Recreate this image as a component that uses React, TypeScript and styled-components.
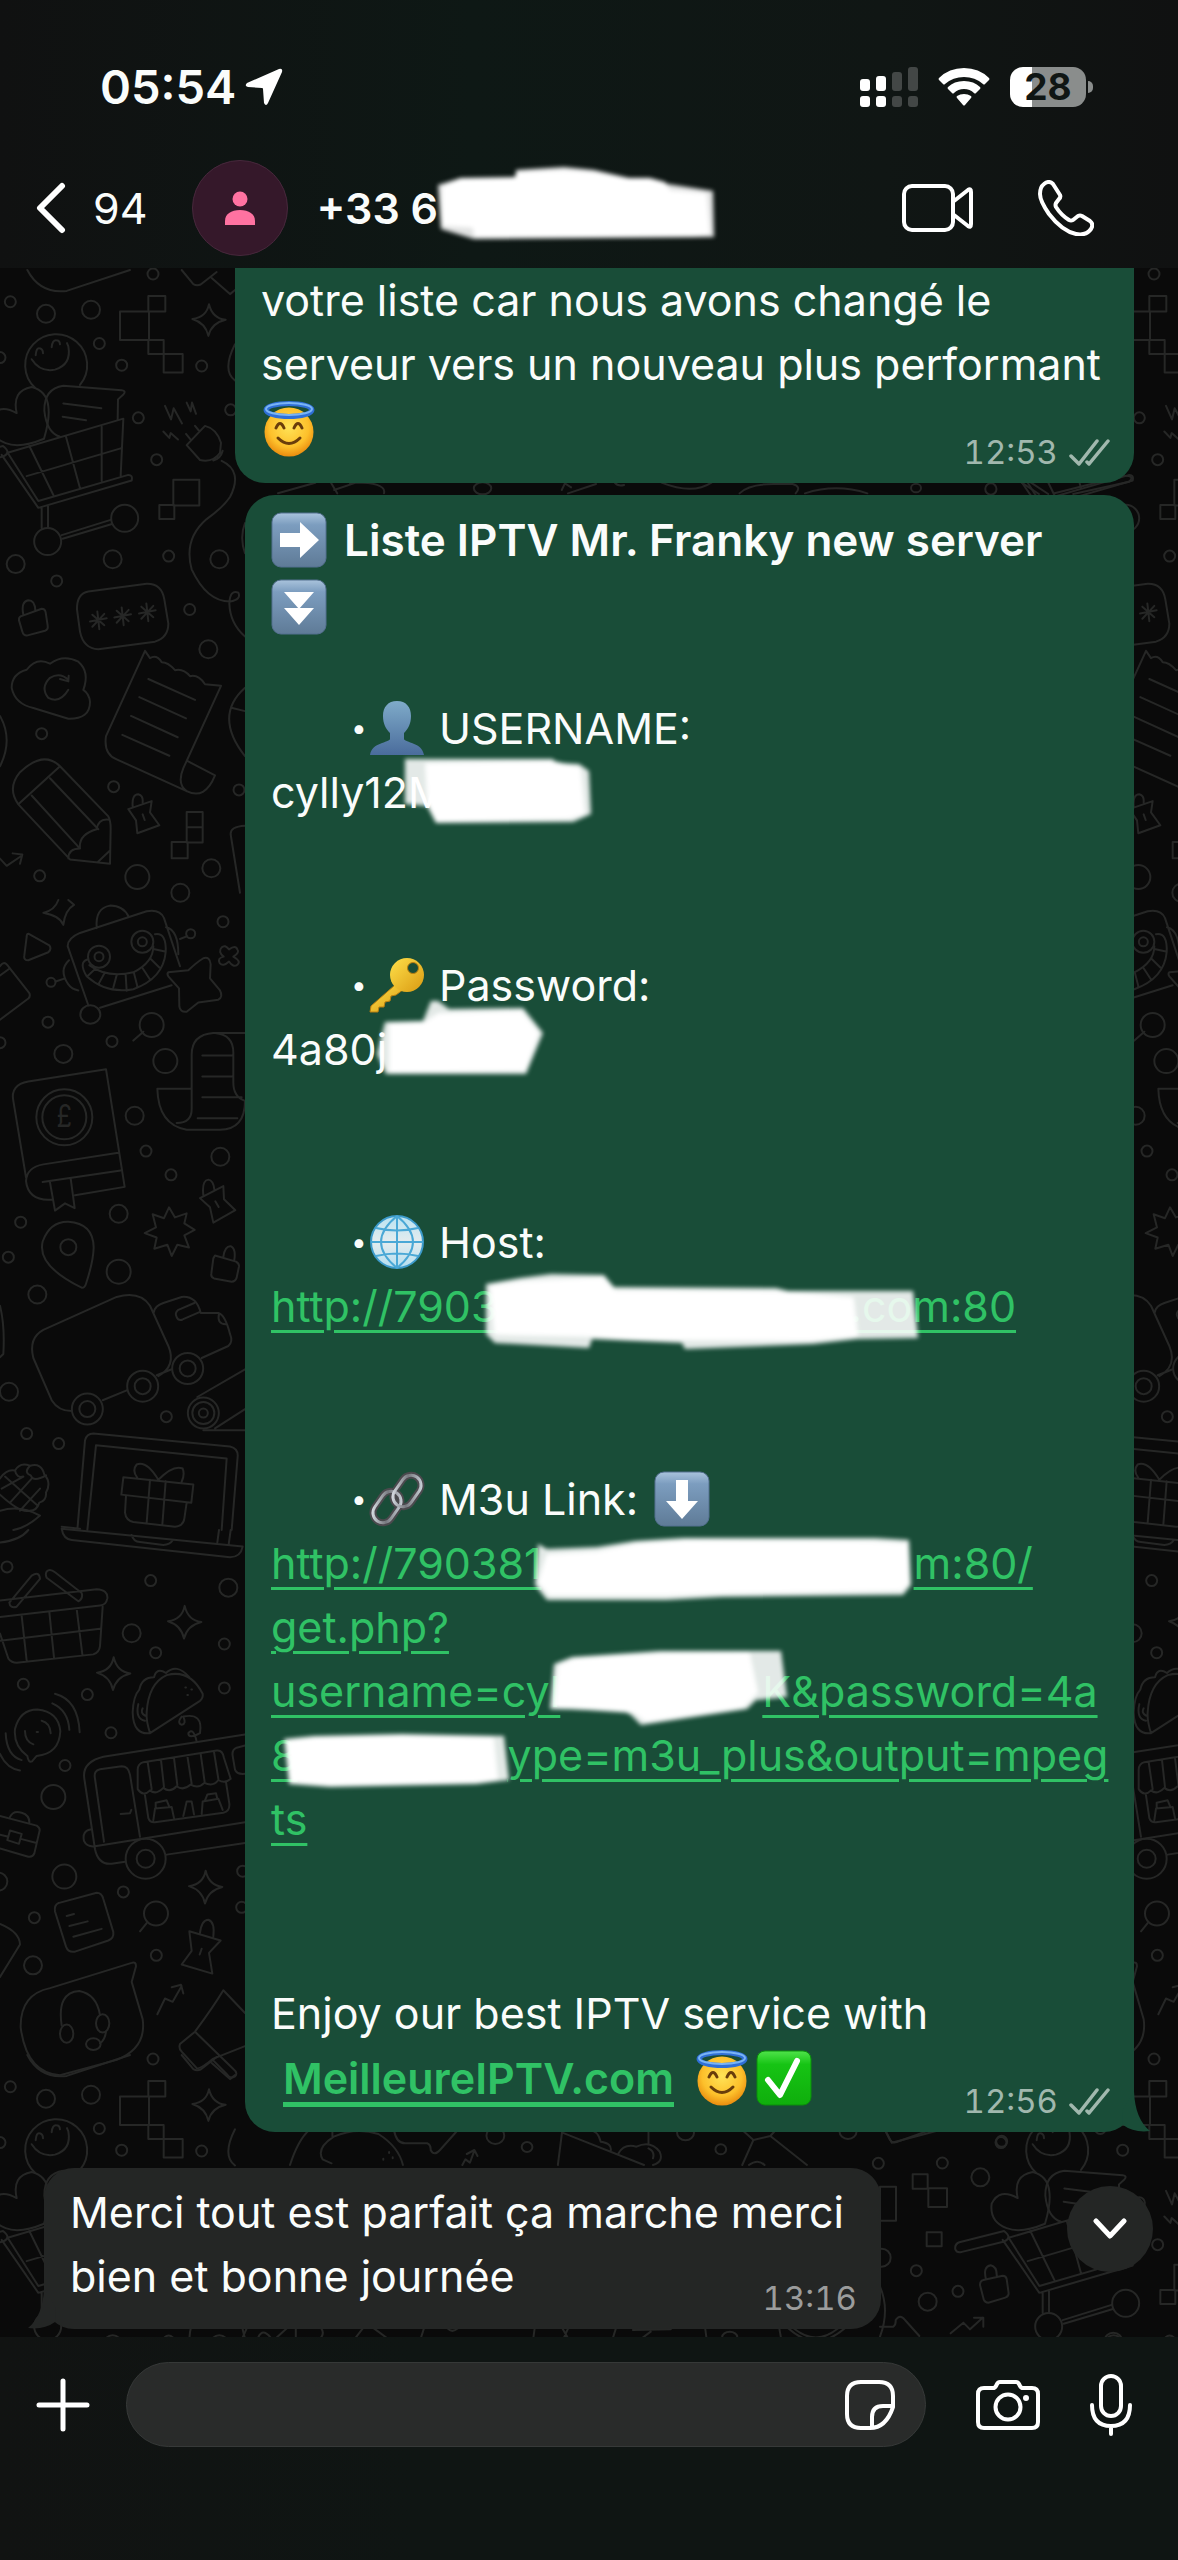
import React from 'react';
import styled, { createGlobalStyle } from 'styled-components';

const GlobalStyle = createGlobalStyle`
  *, *::before, *::after { box-sizing: border-box; }
  body { margin: 0; background: #0a0a0a; }
  button { border: 0; padding: 0; background: none; color: inherit; font: inherit; display: flex; align-items: center; justify-content: center; }
`;

const Page = styled.div`
  min-height: 100vh;
  display: flex;
  flex-direction: column;
  color: #fafcfb;
  font-family: Inter, 'Liberation Sans', sans-serif;
  font-size: 43px;
  line-height: 64px;
`;

const Header = styled.header`
  background: linear-gradient(90deg, #101111 0%, #0e1815 40%, #101614 75%, #101111 100%);
`;

const StatusBar = styled.div`
  display: flex;
  justify-content: space-between;
  align-items: center;
  height: 148px;
  padding: 26px 84px 0 100px;
`;

const StatusGroup = styled.div<{ $gap: number }>`
  display: flex;
  align-items: center;
  gap: ${(p) => p.$gap}px;
`;

const Clock = styled.time`
  font-size: 47px;
  font-weight: 600;
`;

const Battery = styled.div`
  position: relative;
  width: 76px;
  height: 40px;
  margin-right: 8px;
  border-radius: 13px;
  background: linear-gradient(90deg, #ffffff 22px, #8a8d8c 22px);
  color: #101614;
  font-size: 37px;
  font-weight: 700;
  line-height: 40px;
  text-align: center;
  &::after {
    content: '';
    position: absolute;
    left: 78px;
    top: 14px;
    width: 5px;
    height: 12px;
    border-radius: 0 6px 6px 0;
    background: #8a8d8c;
  }
`;

const NavBar = styled.div`
  display: flex;
  align-items: center;
  height: 120px;
  padding: 0 84px 0 36px;
`;

const BackButton = styled.button`
  && { gap: 27px; }
`;

const Avatar = styled.div`
  display: flex;
  align-items: center;
  justify-content: center;
  width: 96px;
  height: 96px;
  margin: 0 28px 0 45px;
  border: 1px solid #47283c;
  border-radius: 50%;
  background: #35182a;
`;

const Title = styled.h1`
  flex: 1;
  margin: 0;
  font-size: 43px;
  font-weight: 600;
  line-height: 64px;
  white-space: nowrap;
`;

const NavActions = styled.div`
  display: flex;
  align-items: center;
  gap: 64px;
`;

const Chat = styled.main`
  position: relative;
  flex: 1;
  display: flex;
  flex-direction: column;
  padding: 0 44px 8px;
  overflow: hidden;
  background: #0a0a0a;
`;

const Wallpaper = styled.svg`
  position: absolute;
  inset: 0;
  width: 100%;
  height: 100%;
  fill: none;
  stroke: #262726;
  stroke-width: 2;
  stroke-linecap: round;
  stroke-linejoin: round;
  path, ellipse, rect, polygon { vector-effect: non-scaling-stroke; }
`;

const Bubble = styled.article<{ $own?: boolean; $cut?: boolean; $width: number; $top?: number }>`
  position: relative;
  align-self: ${(p) => (p.$own ? 'flex-end' : 'flex-start')};
  width: ${(p) => p.$width}px;
  max-width: 100%;
  margin-top: ${(p) => p.$top ?? 0}px;
  padding: ${(p) => (p.$cut ? 0 : 12)}px 24px 13px 26px;
  border-radius: ${(p) => (p.$cut ? '0 0 30px 30px' : '30px')};
  background: ${(p) => (p.$own ? '#194d38' : '#242625')};
`;

const Line = styled.p<{ $emoji?: boolean }>`
  margin: 0;
  height: ${(p) => (p.$emoji ? 65 : 64)}px;
  white-space: nowrap;
`;

const Heading = styled.h2`
  margin: 0;
  padding-bottom: 54px;
  font-size: 44px;
  font-weight: 600;
  line-height: 67px;
`;

const Section = styled.section<{ $last?: boolean }>`
  padding-bottom: ${(p) => (p.$last ? 130 : 128)}px;
`;

const Label = styled(Line)`
  display: flex;
  align-items: center;
  padding-left: 80px;
`;

const Bullet = styled.span`
  width: 18px;
  font-size: 28px;
`;

const LabelText = styled.span`
  margin: 0 16px 0 14px;
`;

const LastRow = styled.div`
  display: flex;
  justify-content: space-between;
  align-items: flex-end;
`;

const LastText = styled.p<{ $emoji?: boolean }>`
  display: flex;
  align-items: center;
  margin: 0 0 8px;
  height: ${(p) => (p.$emoji ? 66 : 64)}px;
  white-space: nowrap;
`;

const Meta = styled.span<{ $own?: boolean }>`
  display: flex;
  align-items: center;
  gap: 11px;
  color: ${(p) => (p.$own ? '#a1b8ae' : '#9b9c9c')};
  font-size: 33px;
  font-variant-numeric: tabular-nums;
  line-height: 36px;
`;

const Link = styled.a<{ $bold?: boolean }>`
  color: #30c265;
  font-weight: ${(p) => (p.$bold ? 600 : 400)};
  text-decoration: underline;
  text-decoration-thickness: ${(p) => (p.$bold ? 5 : 3)}px;
  text-underline-offset: 8px;
  margin: ${(p) => (p.$bold ? '0 20px 0 12px' : '0')};
`;

const LinkLine = styled.span`
  display: block;
  height: 64px;
  white-space: nowrap;
`;

const BlotSvg = styled.svg<{ $left?: number; $right?: number }>`
  position: relative;
  z-index: 1;
  height: 64px;
  margin-left: ${(p) => p.$left ?? 0}px;
  margin-right: ${(p) => p.$right ?? 0}px;
  overflow: visible;
  vertical-align: top;
  fill: #ffffff;
  filter: blur(2px);
`;

const EmojiSvg = styled.svg`
  flex: none;
  width: 56px;
  height: 56px;
  vertical-align: -12px;
`;

const EmojiGap = styled.span`
  display: inline-block;
  width: 6px;
`;

const Tail = styled.svg<{ $own?: boolean }>`
  position: absolute;
  bottom: 0;
  ${(p) => (p.$own ? 'right: -16px;' : 'left: -16px; transform: scaleX(-1);')}
  width: 28px;
  height: 41px;
  fill: ${(p) => (p.$own ? '#194d38' : '#242625')};
`;

const ScrollDown = styled.button`
  && {
    position: absolute;
    right: 25px;
    bottom: 65px;
    width: 86px;
    height: 86px;
    border-radius: 50%;
    background: #242625;
  }
`;

const Composer = styled.footer`
  display: flex;
  align-items: center;
  padding: 25px 46px 113px 36px;
  background: linear-gradient(90deg, #111312 0%, #0f1513 35%, #0f1513 100%);
`;

const Field = styled.div`
  flex: 1;
  min-width: 0;
  display: flex;
  align-items: center;
  height: 85px;
  margin: 0 50px 0 36px;
  padding: 0 30px;
  border: 1px solid #363938;
  border-radius: 43px;
  background: #292b2a;
`;

const TextInput = styled.input`
  flex: 1;
  min-width: 0;
  border: 0;
  outline: 0;
  background: transparent;
  color: #fafcfb;
  font: inherit;
`;

const ComposerActions = styled.div`
  display: flex;
  align-items: center;
  gap: 50px;
`;

type BlotProps = { x: number; y: number; w: number; points: string; soft?: string; left?: number; right?: number };

/* A hand-brushed cover over part of a line; y is the top of that line. */
const Blot = ({ x, y, w, points, soft, left, right }: BlotProps) => (
  <BlotSvg width={w} viewBox={`${x} ${y} ${w} 64`} $left={left} $right={right} aria-hidden="true">
    {soft && <polygon points={soft} opacity="0.88" />}
    <polygon points={points} stroke="#ffffff" strokeWidth="4" strokeLinejoin="round" />
  </BlotSvg>
);

const Emoji = ({ label, children }: { label: string; children: React.ReactNode }) => (
  <EmojiSvg viewBox="0 0 56 56" role="img" aria-label={label}>{children}</EmojiSvg>
);

const Gradients = () => (
  <svg width="0" height="0" style={{ position: 'absolute' }} aria-hidden="true">
    <defs>
      <linearGradient id="key" x1="0" y1="0" x2="0" y2="1"><stop offset="0" stopColor="#a9c3dc" /><stop offset=".22" stopColor="#7c9dbf" /><stop offset="1" stopColor="#5f7b97" /></linearGradient>
      <linearGradient id="bust" x1="0" y1="0" x2="0" y2="1"><stop offset="0" stopColor="#7fabc9" /><stop offset="1" stopColor="#4a6c9c" /></linearGradient>
      <radialGradient id="face" cx=".5" cy=".4" r=".62"><stop offset="0" stopColor="#ffe357" /><stop offset=".65" stopColor="#fdc02b" /><stop offset="1" stopColor="#e8870c" /></radialGradient>
      <linearGradient id="gold" x1="0" y1="0" x2="1" y2="1"><stop offset="0" stopColor="#ffe04a" /><stop offset="1" stopColor="#d99a12" /></linearGradient>
      <linearGradient id="ok" x1="0" y1="0" x2="0" y2="1"><stop offset="0" stopColor="#4fe34a" /><stop offset=".25" stopColor="#16c414" /><stop offset="1" stopColor="#0fae0c" /></linearGradient>
      <linearGradient id="ball" x1="0" y1="0" x2="0" y2="1"><stop offset="0" stopColor="#b9e3f2" /><stop offset=".5" stopColor="#e4ecee" /><stop offset="1" stopColor="#b4dff0" /></linearGradient>
      <linearGradient id="steel" x1="0" y1="0" x2="1" y2="1"><stop offset="0" stopColor="#e6ecf2" /><stop offset=".5" stopColor="#77797f" /><stop offset="1" stopColor="#d5dce4" /></linearGradient>
    </defs>
  </svg>
);

const Keycap = ({ label, d }: { label: string; d: string }) => (
  <Emoji label={label}>
    <rect x="1" y="1" width="54" height="54" rx="9" fill="url(#key)" stroke="#557090" />
    <path d={d} fill="#ffffff" />
  </Emoji>
);

const Angel = () => (
  <Emoji label="halo">
    <circle cx="28" cy="31" r="24.500" fill="url(#face)" />
    <path d="M15 27q4-9 8 0M33 27q4-9 8 0" fill="none" stroke="#6a3d0b" strokeWidth="3" strokeLinecap="round" />
    <path d="M17 37q11 11 22 0" fill="none" stroke="#6a3d0b" strokeWidth="3" strokeLinecap="round" />
    <ellipse cx="28" cy="9" rx="23" ry="6.500" fill="none" stroke="#2f6fd6" strokeWidth="5" />
    <ellipse cx="28" cy="8" rx="23" ry="6" fill="none" stroke="#79b4f5" strokeWidth="2" />
  </Emoji>
);

const Bust = () => (
  <Emoji label="user">
    <path d="M28 1c9 0 14 6 14 15 0 8-3 13-7 17v6c1 4 18 3 20 16H1c2-13 19-12 20-16v-6c-4-4-7-9-7-17C14 7 19 1 28 1z" fill="url(#bust)" />
  </Emoji>
);

const Key = () => (
  <Emoji label="key">
    <path d="M26 28L2 49l-1 6 8 0 1-5 5 0 1-5 5-1 1-5 5-1 8-6z" fill="url(#gold)" stroke="#b97f10" />
    <circle cx="38" cy="18" r="17" fill="url(#gold)" />
    <circle cx="44" cy="11" r="5.500" fill="#194d38" stroke="#b97f10" />
  </Emoji>
);

const Globe = () => (
  <Emoji label="globe">
    <circle cx="28" cy="28" r="26" fill="url(#ball)" stroke="#3d9bcb" strokeWidth="2" />
    <path d="M28 2v52M2 28h52M7 14q21 5 42 0M7 42q21-5 42 0M28 2q-32 26 0 52M28 2q32 26 0 52" fill="none" stroke="#4aa8d6" strokeWidth="2" />
  </Emoji>
);

const Chain = () => (
  <Emoji label="link">
    <g fill="none" strokeWidth="7" stroke="#4b4a4e">
      <rect x="1" y="26" width="34" height="20" rx="10" transform="rotate(-55 18 36)" />
      <rect x="21" y="10" width="34" height="20" rx="10" transform="rotate(-55 38 20)" />
    </g>
    <g fill="none" strokeWidth="3" stroke="url(#steel)">
      <rect x="1" y="26" width="34" height="20" rx="10" transform="rotate(-55 18 36)" />
      <rect x="21" y="10" width="34" height="20" rx="10" transform="rotate(-55 38 20)" />
    </g>
  </Emoji>
);

const Check = () => (
  <Emoji label="check">
    <rect x="1" y="1" width="54" height="54" rx="8" fill="url(#ok)" stroke="#0a8f0a" />
    <path d="M12 30l12 15L41 11" fill="none" stroke="#ffffff" strokeWidth="6" strokeLinecap="round" strokeLinejoin="round" />
  </Emoji>
);

const Ticks = () => (
  <svg width="41" height="27" viewBox="0 0 41 27" fill="none" stroke="#a1b8ae" strokeWidth="3.500" strokeLinecap="round" strokeLinejoin="round" aria-hidden="true">
    <path d="M2 17l8 8L28 2M18 23l2 2L39 2" />
  </svg>
);

const TailShape = ({ own }: { own?: boolean }) => (
  <Tail $own={own} viewBox="0 0 28 41" aria-hidden="true">
    <path d="M12 0Q13 28 28 40Q12 42 1 34L0 20Z" />
  </Tail>
);

type Ring = [number, number];

/* Doodle sheets keep their own coordinate scale: k is the vertical units per pixel, 3 the horizontal. */
const Rings = ({ at, r, k }: { at: Ring[]; r: number; k: number }) => (
  <>{at.map(([x, y]) => <ellipse key={`${x}-${y}`} cx={x} cy={y} rx={r * 3} ry={r * k} />)}</>
);

const star4 = (x: number, y: number) =>
  `M${x} ${y - 39}q10 35 50 39q-42 8-52 40q-8-32-48-42q42-4 50-37z`;

const asterisk = (x: number, y: number) =>
  `M${x - 3} ${y - 22}l6 44M${x - 25} ${y + 3}l50-8M${x - 18} ${y - 14}l36 26M${x + 18} ${y - 16}l-36 32`;

const DoodleTile = () => (
  <g id="doodles">
    <g transform="translate(0 2) scale(.333333 .401770)">
      <Rings k={2.489} r={5.5} at={[[31, 79], [298, 183], [365, 237], [605, 239], [459, 10], [415, 368], [470, 472], [0, 218], [170, 774], [506, 712], [569, 845], [125, 1154], [341, 1286], [119, 1508], [692, 348], [717, 1294]]} />
      <Rings k={2.489} r={9} at={[[138, 109], [273, 99], [47, 732], [338, 720], [658, 720], [625, 944], [634, 1489], [541, 1550]]} />
      <Rings k={2.489} r={12} at={[[412, 1511]]} />
      <Rings k={2.489} r={13.5} at={[[143, 676], [374, 618]]} />
      <path d="M82 0Q120 60 200 52L390 0M545 0L580 35Q590 40 602 36L650 5M635 20L690 60L705 50" />
      <path d="M105 293A93 77 0 1 1 240 286M95 222Q120 255 165 248Q215 235 205 190l-4-8M107 212q2-20 12-17q10 2 10 12M155 192q2-18 14-17q10 0 11 10" />
      <path d="M50 356Q-5 330-28 370Q-35 415 17 431Q60 445 132 420Q150 370 145 340Q140 300 95 291Q35 300 50 356" />
      <path d="M180 415Q140 405 133 350Q132 295 190 288L365 299Q380 301 370 310L354 322L353 372M190 332L304 344M188 365L258 374" />
      <path d="M23 455L370 370L362 512M23 455L115 575L385 510q14 0 10 14L115 592L5 460M80 513L362 444M88 438L160 560M198 415L240 543M305 390V525M125 592V642M144 588V640M185 660L332 622M188 669L336 632M9 438L-125 466q-15 5-12 18q5 10 20 6L10 464q25-10-1-26" />
      <path d="M360 103h87v71h-87zM445 65h51v38h-51zM445 174h46v35h-46zM491 209h57v46h-57zM520 522h78v64h-78zM478 585h45v35h-45zM560 1349h48v76h-48zM560 1387h48M515 1424h48v40h-48z" />
      <path d={star4(627, 124)} />
      <path d="M560 436L615 388Q650 395 663 430L660 455Q640 480 600 473ZM585 388l14 14M558 408l14 14M640 474Q662 470 668 450M495 338l18 34l8-28l25 38M560 330l12 22l4-22l12 28M490 402l18 16l4-12l22 16" />
      <path d="M665 475Q730 500 690 565Q670 590 620 620Q550 670 575 745Q620 825 690 825Q725 820 715 803Q690 795 688 830Q690 880 735 912M705 185Q665 250 705 275M735 630Q718 665 735 705" />
      <path d="M62 862L125 843Q135 843 137 852L143 885Q145 895 135 898L80 910Q70 910 67 900L57 872Q56 864 62 862M70 858Q62 825 85 822Q105 822 106 848" />
      <path d="M265 800L440 781Q485 780 493 820L505 880Q505 915 465 925L295 944Q250 942 240 900L231 845Q230 805 265 800" />
      <path d={asterisk(295, 872) + asterisk(368, 862) + asterisk(442, 852)} />
      <path d="M80 995Q35 1005 35 1040Q45 1080 100 1090L205 1117Q270 1118 270 1075Q268 1055 250 1045Q270 1000 235 975Q190 955 150 980Q110 962 80 995M205 1020Q180 1000 150 1015Q120 1040 145 1065Q180 1080 205 1045M180 1018L205 1024L206 1010" />
      <path d="M435 948L318 1160Q310 1205 350 1218L560 1297Q615 1320 645 1258L562 1222M663 1035L550 1240Q530 1280 560 1297M435 948l15 18q20-10 35 10q20 0 40 20q25-5 45 15q25-5 45 20L663 1035M445 1018L585 1070M418 1063L558 1116M393 1110L533 1163M367 1157L508 1209" />
      <path d="M55 1330Q20 1290 60 1250Q130 1195 180 1235L325 1360Q332 1370 332 1390L330 1478L210 1467ZM55 1330L180 1235M95 1308L240 1440M150 1265L295 1392M205 1465Q205 1440 240 1440Q235 1405 290 1392Q295 1365 325 1368M295 1472L330 1445" />
      <path d="M385 1342L455 1322L450 1350L478 1382L412 1402L408 1370ZM398 1335Q395 1305 415 1305Q430 1308 428 1325M428 1355l6 14M0 1465L20 1483L65 1458M38 1452L67 1455L60 1478M0 1110Q40 1170 0 1235M735 1040Q640 1110 735 1210M697 1090L735 1098M735 1383Q690 1385 692 1405L720 1550" />
    </g>
    <g transform="translate(0 632) scale(.333333 .401770)">
      <Rings k={2.489} r={5.5} at={[[669, 54], [144, 304], [336, 352], [438, 625], [513, 684], [62, 802], [25, 889], [499, 1286], [80, 1328], [176, 1353], [0, 355]]} />
      <Rings k={2.489} r={9} at={[[190, 383], [404, 537], [661, 639], [356, 781], [112, 982], [27, 1224]]} />
      <Rings k={2.489} r={12} at={[[455, 311], [496, 401], [356, 925]]} />
      <Rings k={2.489} r={4.5} at={[[153, 205], [572, 84], [297, 141], [427, 104], [610, 1277]]} />
      <Rings k={2.489} r={11} at={[[297, 141], [427, 104], [610, 1277]]} />
      <Rings k={2.489} r={15.5} at={[[262, 1267], [428, 1210], [563, 1166], [610, 1277]]} />
      <Rings k={2.489} r={8} at={[[262, 1267], [428, 1210], [563, 1166], [205, 864]]} />
      <Rings k={2.489} r={28} at={[[193, 541]]} />
      <Rings k={2.489} r={22} at={[[193, 541]]} />
      <path d="M430 328L400 350M175 0Q165 25 130 32Q180 40 190 62Q195 25 222 12L205 0M85 84L148 113Q156 122 145 130L85 150Q70 150 73 138L80 92Q80 84 85 84M0 165Q12 148 25 165L88 232Q92 240 85 245L0 298M0 188L30 170" />
      <path d="M265 262L203 115Q203 95 240 82L440 28Q480 22 492 45L540 165M300 268L515 212M290 70Q285 20 330 14Q370 14 386 42M207 150Q175 175 205 210Q215 222 235 225M498 68Q535 75 535 135M195 195L167 203M540 97L562 90" />
      <path d="M262 148Q235 155 260 190Q320 235 400 222Q490 195 497 130Q500 80 465 85M268 162Q320 195 400 180Q460 155 460 115M340 218L350 187M380 226L377 187M413 218L402 182M450 198L428 170M478 168L450 145M495 128L460 122M295 210L315 180M262 190L285 172" />
      <ellipse cx="271" cy="285" rx="30" ry="23" />
      <path d="M505 180L565 175Q590 155 610 145Q630 140 632 160L630 195L660 225Q670 240 655 248L595 255L560 278Q540 280 538 265L537 220L505 190Q500 183 505 180M665 118q10-8 22 5q20-12 25 0q8 8-12 18q25 12 12 20q-12 8-25-8q-18 14-28 4q-8-12 12-16q-18-12-6-23" />
      <path d="M735 331H640Q575 335 575 385V520Q575 555 530 555M575 470H472Q475 560 560 572H660Q735 570 735 500Q700 490 700 455V380Q700 335 645 331M607 387H697M607 439H697M607 491H725M593 543H712" />
      <path d="M78 690L40 500Q30 460 85 452L318 421L374 714L225 735M155 746Q85 750 78 700Q80 665 130 658L355 629M128 702L362 673M150 703L165 773L195 755L224 767L212 693" />
      <text x="193" y="566" fontSize="76" textAnchor="middle" fill="#262726" stroke="none">£</text>
      <path d="M245 965Q110 910 128 850Q150 800 205 801Q280 805 281 865Q280 900 258 955Q254 966 245 965" />
      <polygon points="507,765 525,790 560,780 553,805 584,821 553,835 567,865 532,858 515,886 502,858 463,868 470,840 434,829 468,815 458,782 492,792" />
      <path d="M600 742L670 712L672 745L706 772L640 803L630 765ZM610 735Q605 698 625 696Q640 698 643 720M646 750l10 14M645 885L708 900Q718 905 717 912L710 940Q706 950 695 950L642 942Q632 938 634 930L640 892ZM670 888Q675 860 693 862Q708 868 703 895" />
      <path d="M215 1272Q175 1272 155 1245L100 1140Q85 1090 130 1070L350 988Q420 972 450 1010L505 1110Q530 1160 475 1185M308 1245L382 1220M470 1183L515 1168M462 1025Q465 1010 490 1003L545 988Q590 985 602 1028L655 1028Q675 1032 690 1080Q700 1100 685 1110L605 1140M583 1003L535 1020Q523 1028 530 1038Q535 1048 548 1044L600 1025M657 1030Q650 1055 677 1056" />
      <path d="M592 1237L735 1168M645 1315L735 1267M610 1320H735M232 1568L255 1345Q260 1328 280 1328L690 1360Q715 1365 713 1385L695 1568M262 1568L288 1357L680 1390L665 1568M185 1560L240 1565" />
      <path d="M370 1437L580 1455L574 1500L364 1480ZM378 1482L375 1525Q378 1545 400 1548L525 1560Q550 1558 553 1540L560 1500M450 1443L440 1550M497 1447L487 1555M475 1443Q440 1395 410 1405Q395 1420 412 1438M475 1443Q520 1405 548 1415Q555 1430 545 1448" />
      <path d="M45 1420Q60 1398 90 1408Q125 1400 133 1430Q155 1450 138 1475Q140 1495 118 1500Q110 1522 85 1520Q60 1525 0 1480M0 1440Q20 1415 45 1420Q50 1440 70 1435M90 1408Q70 1425 92 1432Q100 1450 138 1432M15 1435L110 1505M5 1465L70 1435M30 1500L95 1440M60 1520L120 1465M0 1520Q60 1505 120 1532Q80 1562 40 1568M0 1010Q15 1060 10 1130L0 1138" />
    </g>
    <g transform="translate(0 1262) scale(.333333 .414594)">
      <Rings k={2.412} r={5.5} at={[[21, 89], [452, 122], [673, 275], [467, 296], [70, 372], [262, 397], [673, 381], [333, 489], [195, 568], [370, 873], [103, 935], [469, 1026], [728, 823], [725, 910]]} />
      <Rings k={2.412} r={9} at={[[685, 139], [395, 249], [99, 1050], [-5, 848], [437, 793]]} />
      <Rings k={2.412} r={12} at={[[160, 644], [193, 836], [468, 925]]} />
      <Rings k={2.412} r={20} at={[[437, 793]]} />
      <path d="M185-3Q190 22 215 24L690 66Q722 65 728 40L185-3M395 12Q400 28 420 29L490 36Q510 36 518 25M657 0L652 30M692 0L686 35M0 30Q60 25 85 0" />
      <path d="M0 170L290 143Q325 145 322 165Q318 182 300 182L0 210M0 250L25 310Q35 320 50 320L280 300Q298 295 300 280L308 185M0 267L300 238M65 207L80 315M148 198L162 308M230 190L247 300M28 175L95 110Q118 98 120 118L50 185Q30 190 28 175M140 100Q150 92 165 102L245 152Q250 165 235 172L140 115Q135 107 140 100" />
      <path d={star4(554, 222) + star4(341, 346) + star4(617, 861)} />
      <path d="M82 545Q40 520 45 480Q60 433 112 433Q175 438 181 485Q178 540 110 545L96 558Q85 562 82 545M125 460Q150 465 152 490M75 485Q75 510 100 517M157 418Q205 435 208 482M165 395Q235 410 239 488M17 490Q20 545 65 555M0 540Q20 575 60 580M110 487h4M556 380h2M574 385h2M562 398h2" />
      <path d="M450 490Q438 460 440 440Q445 370 500 350Q570 335 608 395Q610 405 600 412L450 490Q400 495 398 440Q400 400 418 385Q425 355 462 355Q470 330 498 345Q530 320 568 355M415 420Q405 455 435 460M428 430q-8 12 8 18M545 450q-15 15 0 20q15-2 5-20Q610 440 600 490Q565 505 565 490Q580 475 590 510" />
      <path d="M735 493L310 547Q245 560 253 600L285 770Q295 808 335 805L375 800M500 783L735 755M285 763L735 705M312 752L285 600Q280 580 300 577L365 570Q385 570 390 590L420 740M362 685L390 683L394 675M275 722Q245 725 252 750Q260 765 285 763" />
      <path d="M692 600L672 550Q668 530 650 532L430 560Q412 565 413 580L413 625Q430 645 450 628Q468 640 490 622Q510 635 530 618Q550 630 572 614Q595 625 613 610Q640 620 655 603Q675 613 692 600M443 560L455 625M483 555L492 620M522 550L532 615M562 545L575 612M602 540L614 608M642 535L655 600M435 640L445 695Q450 706 465 705L670 682Q690 678 688 660L678 608M460 700L465 672L515 668L522 695M467 670V658L500 652L508 668M605 685L608 655L655 648L668 675M615 652L622 638L648 635L652 648M550 690L560 655L575 655L582 686M735 520L710 525Q695 530 698 545L705 578Q710 590 735 588" />
      <path d="M0 690L110 713Q120 718 119 725L103 780Q98 790 85 788L0 768M30 692Q40 675 65 682Q90 688 88 708M0 735L25 740M62 745L110 755M30 725L65 733L57 757L22 748ZM0 950Q60 970 60 1000L0 1078" />
      <path d="M175 900L290 875Q305 875 310 890L340 970Q342 985 325 990L225 1017Q205 1020 198 1005L165 920Q162 905 175 900M200 931L222 926M208 955L263 944M220 981L305 962M440 948L420 968" />
      <path d="M568 968L662 990L627 1020L637 1070L545 1048L575 1015ZM600 972Q605 940 625 940Q645 945 640 980M605 1010l-6 14M472 1168L495 1130L518 1138L545 1100M515 1103L543 1097L550 1118" />
      <path d="M395 1090L408 1052Q408 1040 395 1044L150 1105Q60 1120 62 1200Q80 1310 180 1315L350 1278Q440 1250 428 1180L395 1090M185 1195Q170 1115 238 1112Q290 1120 300 1170M318 1210Q315 1230 300 1238" />
      <ellipse cx="200" cy="1215" rx="20" ry="22" />
      <ellipse cx="308" cy="1190" rx="20" ry="22" />
      <ellipse cx="280" cy="1240" rx="22" ry="14" />
      <path d="M735 1165L670 1110Q640 1150 585 1210L540 1240Q535 1250 545 1258L590 1298Q600 1302 640 1275L735 1245M585 1210L700 1300Q715 1310 705 1318Q690 1325 680 1312L638 1278" />
    </g>
  </g>
);

const Doodles = () => (
  <Wallpaper aria-hidden="true">
    <defs><DoodleTile /></defs>
    <use href="#doodles" />
    <use href="#doodles" x="1001" />
    <use href="#doodles" y="1785" />
    <use href="#doodles" x="1001" y="1785" />
    <g transform="translate(200 -8) scale(.623714 .333333)">
      <path d="M125 700L185 668M210 668L220 700M215 690L250 668M580 690l5-20l10 12M590 700L635 672M665 668Q670 680 680 675M740 668Q790 705 820 668M865 700Q880 672 920 672H950Q965 680 955 700M970 700Q1020 670 1070 700M1315 665L1345 702M1330 665L1360 702M1370 700L1480 648Q1500 645 1490 665L1400 702M240 668Q300 665 295 700" />
      <ellipse cx="453" cy="685" rx="14" ry="18" />
      <ellipse cx="1148" cy="684" rx="8" ry="13" />
      <ellipse cx="1268" cy="687" rx="9" ry="17" />
    </g>
    <g transform="translate(240 1852) scale(.446429 .333333)">
      <path d="M155 30Q130 60 112 135M207 30V50M205 130L185 118Q170 85 210 50Q260 20 310 42Q355 80 365 135M345 30Q350 70 370 70H420Q428 75 427 90Q435 110 448 90L488 30M498 135L505 118L515 128L525 92M508 102L525 90L532 108M722 30L712 135M722 38L905 135M775 30Q800 25 808 65Q835 70 830 95M848 100Q860 70 888 80Q920 60 940 95Q950 125 925 135M915 85Q930 95 925 115M915 30V70M1125 135L1150 60L1188 48L1270 135M1150 60L1125 30M1188 48L1200 30M1140 135Q1160 115 1175 135M1445 30L1460 68L1568 30" />
      <path d="M334 96v3M321 116v3M342 112v3" />
      <path d="M5 655L15 625M40 655Q50 620 70 655M80 655L105 625M125 655V625M180 655Q190 640 182 625M258 655L275 625M300 625L330 655M405 655L412 625M465 625Q475 640 488 625M657 655L660 625M722 625L735 655M735 625L725 655M835 655L842 625M880 630L965 628M900 655L920 635M1045 655L1042 625M1208 625L1212 655M1228 625Q1290 700 1355 625M1240 625Q1290 680 1340 625" />
      <ellipse cx="572" cy="47" rx="20" ry="25" />
      <ellipse cx="643" cy="81" rx="12" ry="15" />
      <ellipse cx="998" cy="38" rx="19" ry="23" />
      <ellipse cx="1077" cy="88" rx="12" ry="15" />
      <ellipse cx="1362" cy="35" rx="19" ry="22" />
      <ellipse cx="1097" cy="652" rx="17" ry="17" />
    </g>
    <g transform="translate(880 1812) scale(.333333)">
      <Rings k={3} r={5.5} at={[[365, 184], [187, 249], [-5, 250], [109, 572], [234, 634]]} />
      <Rings k={3} r={9} at={[[301, 292], [143, 665], [5, 533], [700, 785]]} />
      <path d="M98 283h45v43h-45zM145 325h56v56h-56zM140 457h45v42h-45zM0 320h48v102h-48zM212 760L250 728L270 748L308 713M282 713H310V740M15 150L30 180Q38 190 50 186L145 152M0 740H40Q48 735 47 720Q60 700 75 720L118 768M0 620Q30 690 0 770" />
      <path d="M310 600L368 587Q378 587 380 597L386 640Q386 650 376 653L325 668Q315 668 311 658L300 615Q300 602 310 600M318 598Q308 560 332 556Q352 560 350 590" />
    </g>
  </Wallpaper>
);

export default function App() {
  return (
    <Page>
      <GlobalStyle />
      <Gradients />
      <Header>
        <StatusBar>
          <StatusGroup $gap={9}>
            <Clock>05:54</Clock>
            <svg width="38" height="38" viewBox="0 0 38 38" aria-hidden="true"><path d="M34 1q4-1 3 3L23 35q-2 4-4 0L18 21Q18 20 17 20L3 19q-4-1-1-4z" fill="#fff" /></svg>
          </StatusGroup>
          <StatusGroup $gap={20}>
            <svg width="58" height="40" viewBox="0 0 58 40" fill="#fff" aria-hidden="true">
              <rect x="0" y="12" width="10" height="12" rx="3" /><rect x="16" y="9" width="10" height="15" rx="3" />
              <rect x="0" y="29" width="10" height="11" rx="3" /><rect x="16" y="29" width="10" height="11" rx="3" />
              <g fill="#434746"><rect x="32" y="5" width="10" height="19" rx="3" /><rect x="48" y="0" width="10" height="24" rx="3" /><rect x="32" y="29" width="10" height="11" rx="3" /><rect x="48" y="29" width="10" height="11" rx="3" /></g>
            </svg>
            <svg width="52" height="38" viewBox="0 0 52 38" fill="#fff" aria-hidden="true">
              <path d="M26 0Q41 0 51 10q1 1 0 2l-4 4q-1 1-2 0Q37 9 26 9T7 16q-1 1-2 0l-4-4q-1-1 0-2Q11 0 26 0z" />
              <path d="M26 13q10 0 16 6 1 1 0 2l-4 4q-1 1-2 0-4-4-10-4t-10 4q-1 1-2 0l-4-4q-1-1 0-2 6-6 16-6z" />
              <path d="M26 26q4 0 7 2 1 1 0 2l-6 7q-1 1-2 0l-6-7q-1-1 0-2 3-2 7-2z" />
            </svg>
            <Battery>28</Battery>
          </StatusGroup>
        </StatusBar>
        <NavBar>
          <BackButton type="button" aria-label="Back, 94 chats">
            <svg width="30" height="52" viewBox="0 0 30 52" fill="none" stroke="#fff" strokeWidth="6" strokeLinecap="round" strokeLinejoin="round" aria-hidden="true"><path d="M26 4L4 26l22 22" /></svg>
            94
          </BackButton>
          <Avatar>
            <svg width="30" height="34" viewBox="0 0 30 34" fill="#ff72a1" aria-hidden="true"><circle cx="15" cy="8" r="7.500" /><path d="M0 34v-4c0-7 6-11 15-11s15 4 15 11v4z" /></svg>
          </Avatar>
          <Title>
            +33 6<Blot x={434} y={176} w={276} points="457,180 512,180 514,174 560,172 590,174 620,180 645,180 660,184 665,192 701,195 704,233 688,235 472,235 470,226 440,224 440,188" soft="434,185 457,178 512,177 512,170 560,167 590,170 625,178 709,191 710,237 470,239 437,229" />
          </Title>
          <NavActions>
            <button type="button" aria-label="Video call">
              <svg width="72" height="48" viewBox="0 0 72 48" fill="none" stroke="#fff" strokeWidth="4" strokeLinejoin="round" aria-hidden="true"><rect x="2" y="2" width="49" height="44" rx="8" /><path d="M52 17L66 6q3-2 3 2v32q0 4-3 2L52 31" /></svg>
            </button>
            <button type="button" aria-label="Voice call">
              <svg width="56" height="56" viewBox="0 0 56 56" fill="none" stroke="#fff" strokeWidth="4" strokeLinejoin="round" aria-hidden="true"><path d="M6 4q5-4 9 0l7 11q1 2-1 4l-3 4q-1 2 0 4 5 8 13 13 2 1 4 0l5-4q2-1 4 0l8 5q4 3 1 8-5 7-15 5Q24 51 11 34 2 21 2 14 2 7 6 4z" /></svg>
            </button>
          </NavActions>
        </NavBar>
      </Header>

      <Chat>
        <Doodles />
        <Bubble $own $cut $width={899}>
          <Line>votre liste car nous avons changé le</Line>
          <Line>serveur vers un nouveau plus performant</Line>
          <LastRow>
            <LastText $emoji><Angel /></LastText>
            <Meta $own>12:53<Ticks /></Meta>
          </LastRow>
        </Bubble>

        <Bubble $own $width={889} $top={12}>
          <Heading>
            <Keycap label="right arrow" d="M9 21h20V10l19 18-19 18V35H9z" /><EmojiGap /> Liste IPTV Mr. Franky new server
            <br />
            <Keycap label="fast down" d="M13 13h30L28 30zM13 29h30L28 46z" />
          </Heading>
          <Section>
            <Label $emoji><Bullet>•</Bullet><Bust /><LabelText>USERNAME:</LabelText></Label>
            <Line>cylly12M<Blot left={-42} x={406} y={759} w={187} points="428,764 554,762 580,768 584,812 570,816 438,819 430,800" soft="406,758 554,758 556,762 580,763 590,770 592,813 574,821 437,822 428,805 406,803" /></Line>
          </Section>
          <Section>
            <Label $emoji><Bullet>•</Bullet><Key /><LabelText>Password:</LabelText></Label>
            <Line>4a80j<Blot left={-8} x={380} y={1016} w={160} points="392,1024 426,1023 440,1014 522,1012 538,1032 525,1068 392,1070" soft="386,1021 424,1020 432,1000 439,1000 450,1008 524,1007 544,1032 527,1073 387,1073 378,1053" /></Line>
          </Section>
          <Section>
            <Label $emoji><Bullet>•</Bullet><Globe /><LabelText>Host:</LabelText></Label>
            <Link href="#host">
              <LinkLine>http://7903<Blot left={-12} right={-68} x={484} y={1273} w={432} points="490,1286 520,1282 600,1278 612,1291 774,1292 850,1298 854,1334 808,1338 626,1337 590,1334 494,1332" soft="484,1283 518,1277 549,1273 602,1274 612,1286 774,1287 786,1290 911,1290 916,1337 855,1338 811,1343 683,1348 680,1342 590,1338 587,1347 493,1342 484,1333" />.com:80</LinkLine>
            </Link>
          </Section>
          <Section $last>
            <Label $emoji><Bullet>•</Bullet><Chain /><LabelText>M3u Link:</LabelText><Keycap label="down arrow" d="M22 9v21H12l16 18 16-18H34V9z" /></Label>
            <Link href="#m3u">
              <LinkLine>http://790381<Blot left={-6} x={538} y={1529} w={378} points="550,1554 600,1551 640,1543 688,1540 874,1541 908,1543 909,1581 903,1587 724,1590 668,1592 552,1592 542,1580" soft="540,1542 549,1547 599,1545 637,1539 686,1536 877,1536 911,1538 913,1583 905,1593 724,1595 668,1598 549,1598 537,1583" />m:80/</LinkLine>
              <LinkLine>get.php?</LinkLine>
              <LinkLine>username=cyl<Blot left={-10} right={-26} x={552} y={1657} w={238} points="562,1664 578,1658 664,1653 750,1652 758,1690 745,1704 648,1718 636,1709 558,1704" soft="556,1662 574,1655 662,1649 783,1649 789,1695 758,1698 749,1707 643,1723 633,1713 624,1708 552,1707" />K&amp;password=4a</LinkLine>
              <LinkLine>8<Blot left={-14} x={282} y={1721} w={224} points="287,1740 314,1737 400,1735 490,1737 494,1776 474,1779 328,1782 290,1779" soft="282,1737 312,1734 400,1732 502,1734 507,1778 474,1782 328,1785 287,1782" />ype=m3u_plus&amp;output=mpeg</LinkLine>
              <LinkLine>ts</LinkLine>
            </Link>
          </Section>
          <Line>Enjoy our best IPTV service with</Line>
          <LastRow>
            <LastText $emoji>
              <Link $bold href="#site">MeilleureIPTV.com</Link>
              <Angel /><EmojiGap /><Check />
            </LastText>
            <Meta $own>12:56<Ticks /></Meta>
          </LastRow>
          <TailShape own />
        </Bubble>

        <Bubble $width={837} $top={36}>
          <Line>Merci tout est parfait ça marche merci</Line>
          <LastRow>
            <LastText>bien et bonne journée</LastText>
            <Meta>13:16</Meta>
          </LastRow>
          <TailShape />
        </Bubble>

        <ScrollDown type="button" aria-label="Scroll to latest">
          <svg width="34" height="22" viewBox="0 0 34 22" fill="none" stroke="#fff" strokeWidth="5" strokeLinecap="round" strokeLinejoin="round" aria-hidden="true"><path d="M3 3l14 15L31 3" /></svg>
        </ScrollDown>
      </Chat>

      <Composer>
        <button type="button" aria-label="Attach">
          <svg width="54" height="54" viewBox="0 0 54 54" stroke="#fff" strokeWidth="5" strokeLinecap="round" aria-hidden="true"><path d="M27 3v48M3 27h48" /></svg>
        </button>
        <Field>
          <TextInput type="text" aria-label="Message" />
          <button type="button" aria-label="Stickers">
            <svg width="50" height="50" viewBox="0 0 50 50" fill="none" stroke="#fff" strokeWidth="4" strokeLinejoin="round" aria-hidden="true"><path d="M16 2h18q14 0 14 14v11Q41 48 25 48h-9Q2 48 2 34V16Q2 2 16 2zM48 26H38q-11 0-11 11v10" /></svg>
          </button>
        </Field>
        <ComposerActions>
          <button type="button" aria-label="Camera">
            <svg width="64" height="50" viewBox="0 0 64 50" fill="none" stroke="#fff" strokeWidth="4" strokeLinejoin="round" aria-hidden="true"><path d="M8 8h9q2 0 3-2l1-2q1-2 3-2h16q2 0 3 2l1 2q1 2 3 2h9q6 0 6 6v28q0 6-6 6H8q-6 0-6-6V14q0-6 6-6z" /><circle cx="32" cy="27" r="12.500" /><circle cx="50" cy="18" r="3" fill="#fff" stroke="none" /></svg>
          </button>
          <button type="button" aria-label="Record">
            <svg width="42" height="62" viewBox="0 0 42 62" fill="none" stroke="#fff" strokeWidth="4" strokeLinecap="round" aria-hidden="true"><rect x="11" y="2" width="20" height="40" rx="10" /><path d="M2 31q0 21 19 21t19-21M21 52v8" /></svg>
          </button>
        </ComposerActions>
      </Composer>
    </Page>
  );
}
